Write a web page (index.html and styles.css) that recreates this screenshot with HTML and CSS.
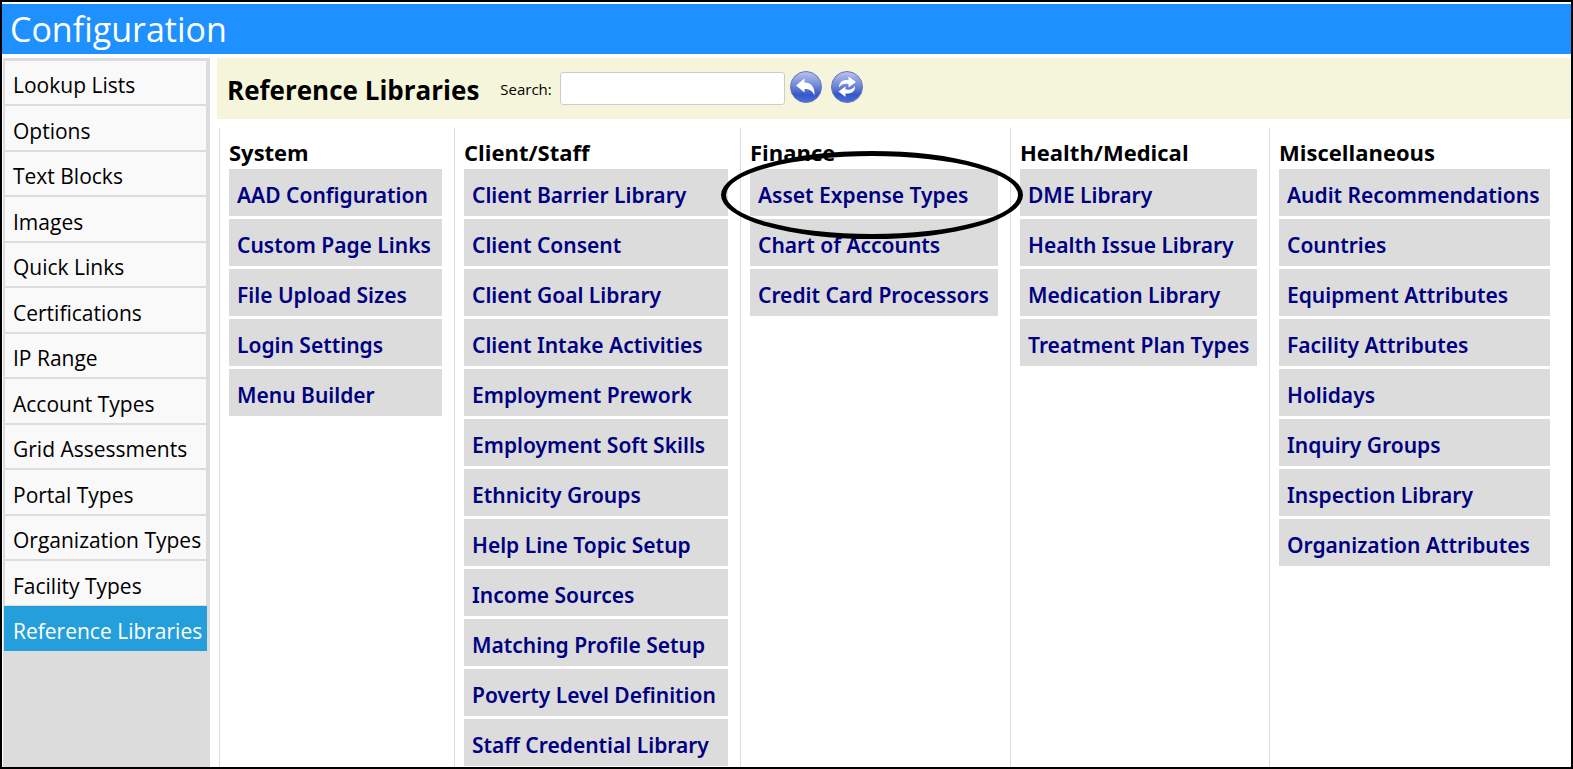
FILE: index.html
```html
<!DOCTYPE html>
<html lang="en">
<head>
<meta charset="UTF-8">
<meta name="viewport" content="width=device-width, initial-scale=1.0">
<title>Configuration</title>
<link rel="stylesheet" href="styles.css">
</head>
<body>

<div class="page">
    <header class="page-header">
        <h1>Configuration</h1>
    </header>

    <div class="layout">
        <nav class="sidebar">
            <ul>
                <li><a href="#">Lookup Lists</a></li>
                <li><a href="#">Options</a></li>
                <li><a href="#">Text Blocks</a></li>
                <li><a href="#">Images</a></li>
                <li><a href="#">Quick Links</a></li>
                <li><a href="#">Certifications</a></li>
                <li><a href="#">IP Range</a></li>
                <li><a href="#">Account Types</a></li>
                <li><a href="#">Grid Assessments</a></li>
                <li><a href="#">Portal Types</a></li>
                <li><a href="#">Organization Types</a></li>
                <li><a href="#">Facility Types</a></li>
                <li><a href="#" class="active">Reference Libraries</a></li>
            </ul>
        </nav>

        <main class="content">
            <form class="toolbar">
                <h2>Reference Libraries</h2>
                <label for="search">Search:</label>
                <input type="text" id="search">
                <button type="reset" aria-label="Clear search">
                    <svg viewBox="0 0 34 34" width="34" height="34">
                        <defs>
                            <linearGradient id="ball" x1="0" y1="0" x2="0" y2="1">
                                <stop offset="0" stop-color="#b9c4ee"/>
                                <stop offset="0.45" stop-color="#7189dc"/>
                                <stop offset="0.75" stop-color="#3558c8"/>
                                <stop offset="1" stop-color="#4a70dc"/>
                            </linearGradient>
                        </defs>
                        <circle cx="17" cy="17" r="15.5" fill="url(#ball)" stroke="#6878b4"/>
                        <path d="M7 15.5 L15.5 8.5 V12.5 C22 12.5 26 16.5 25.5 25.5 C23.5 20.5 20.5 19 15.5 19 V22.5 Z" fill="#fff"/>
                    </svg>
                </button>
                <button type="submit" aria-label="Refresh">
                    <svg viewBox="0 0 34 34" width="34" height="34">
                        <circle cx="17" cy="17" r="15.5" fill="url(#ball)" stroke="#6878b4"/>
                        <path d="M9 17.5 C9 12 12.5 9.5 18.5 10 V6.5 L26 12 L18.5 17.5 V14 C14 13.5 11.5 14 9 17.5 Z" fill="#fff"/>
                        <path d="M25 16 C25.5 21.5 21.5 24 15.5 23.5 V27 L8.5 21.5 L15.5 16.5 V19.5 C20 20 22.5 19.5 25 16 Z" fill="#fff"/>
                    </svg>
                </button>
            </form>

            <div class="libraries">
                <section>
                    <h3>System</h3>
                    <a href="#">AAD Configuration</a>
                    <a href="#">Custom Page Links</a>
                    <a href="#">File Upload Sizes</a>
                    <a href="#">Login Settings</a>
                    <a href="#">Menu Builder</a>
                </section>
                <section>
                    <h3>Client/Staff</h3>
                    <a href="#">Client Barrier Library</a>
                    <a href="#">Client Consent</a>
                    <a href="#">Client Goal Library</a>
                    <a href="#">Client Intake Activities</a>
                    <a href="#">Employment Prework</a>
                    <a href="#">Employment Soft Skills</a>
                    <a href="#">Ethnicity Groups</a>
                    <a href="#">Help Line Topic Setup</a>
                    <a href="#">Income Sources</a>
                    <a href="#">Matching Profile Setup</a>
                    <a href="#">Poverty Level Definition</a>
                    <a href="#">Staff Credential Library</a>
                </section>
                <section>
                    <h3>Finance</h3>
                    <a href="#" class="circled">Asset Expense Types</a>
                    <a href="#">Chart of Accounts</a>
                    <a href="#">Credit Card Processors</a>
                </section>
                <section>
                    <h3>Health/Medical</h3>
                    <a href="#">DME Library</a>
                    <a href="#">Health Issue Library</a>
                    <a href="#">Medication Library</a>
                    <a href="#">Treatment Plan Types</a>
                </section>
                <section>
                    <h3>Miscellaneous</h3>
                    <a href="#">Audit Recommendations</a>
                    <a href="#">Countries</a>
                    <a href="#">Equipment Attributes</a>
                    <a href="#">Facility Attributes</a>
                    <a href="#">Holidays</a>
                    <a href="#">Inquiry Groups</a>
                    <a href="#">Inspection Library</a>
                    <a href="#">Organization Attributes</a>
                </section>
            </div>
        </main>
    </div>
</div>

</body>
</html>
```
FILE: styles.css
```css
* {
    box-sizing: border-box;
}
body {
    margin: 0;
    font-family: "Open Sans", "Noto Sans", sans-serif;
    color: #000;
}
h1, h2, h3 {
    margin: 0;
}
a {
    text-decoration: none;
}
.page {
    display: flex;
    flex-direction: column;
    height: 100vh;
    border: 2px solid #000;
    overflow: hidden;
}
.page-header {
    margin-top: 2px;
    padding: 0 8px;
    background-color: #1e90ff;
    color: #fff;
}
.page-header h1 {
    font-size: 34px;
    font-weight: 400;
    line-height: 50px;
}
.layout {
    display: flex;
    flex: 1;
    gap: 7px;
    min-height: 0;
    padding: 4px 0 0 1px;
}

/* Sidebar */
.sidebar {
    flex: none;
    width: 207px;
    padding: 2px 3px 0 1px;
    background-color: #dcdcdc;
}
.sidebar ul {
    margin: 0;
    padding: 0;
    list-style: none;
}
.sidebar a {
    display: block;
    padding: 6px 8px 0;
    border: 1px solid #dcdcdc;
    background-color: #f9f9f9;
    color: #000;
    font-size: 21px;
    line-height: 37px;
    white-space: nowrap;
}
.sidebar li:nth-child(even) a {
    padding-top: 7px;
}
.sidebar a.active {
    border-color: #259fdc;
    background-color: #259fdc;
    color: #fff;
}

/* Toolbar */
.content {
    display: flex;
    flex: 1;
    flex-direction: column;
    min-width: 0;
}
.toolbar {
    display: flex;
    align-items: center;
    padding: 0 10px;
    background-color: #f5f5dc;
}
.toolbar h2 {
    margin-right: 21px;
    padding-top: 3px;
    font-size: 26px;
    line-height: 58px;
}
.toolbar label {
    margin-right: 8px;
    font-size: 15px;
}
.toolbar input {
    width: 225px;
    height: 33px;
    margin-right: 4px;
    padding: 4px 8px;
    border: 1px solid #ccc;
    border-radius: 3px;
    background-color: #fff;
    font: inherit;
}
.toolbar button {
    height: 34px;
    margin: 0 7px 4px 0;
    padding: 0;
    border: 0;
    background: none;
    cursor: pointer;
}
.toolbar svg {
    display: block;
}

/* Library columns */
.libraries {
    display: grid;
    grid-template-columns: 235fr minmax(0, 286fr) minmax(0, 270fr) minmax(0, 259fr) minmax(0, 302fr);
    flex: 1;
    min-height: 0;
    padding: 9px 0 0 2px;
}
.libraries section {
    display: flex;
    flex-direction: column;
    gap: 3px;
    padding: 8px 12px 0 9px;
    border-left: 1px solid #dcdcdc;
}
.libraries section:last-child {
    padding-right: 21px;
}
.libraries h3 {
    margin-bottom: -3px;
    font-size: 22px;
    line-height: 33px;
}
.libraries a {
    flex: none;
    padding: 5px 8px 0;
    background-color: #dcdcdc;
    color: #000080;
    font-family: "Noto Sans", "Open Sans", sans-serif;
    font-size: 21px;
    font-weight: 650;
    line-height: 42px;
    white-space: nowrap;
}

/* Hand drawn ring around a library */
.circled {
    position: relative;
}
.circled::after {
    content: "";
    position: absolute;
    top: -18px;
    right: -25px;
    bottom: -23px;
    left: -29px;
    border: 5px solid #000;
    border-radius: 50%;
    pointer-events: none;
}
```
